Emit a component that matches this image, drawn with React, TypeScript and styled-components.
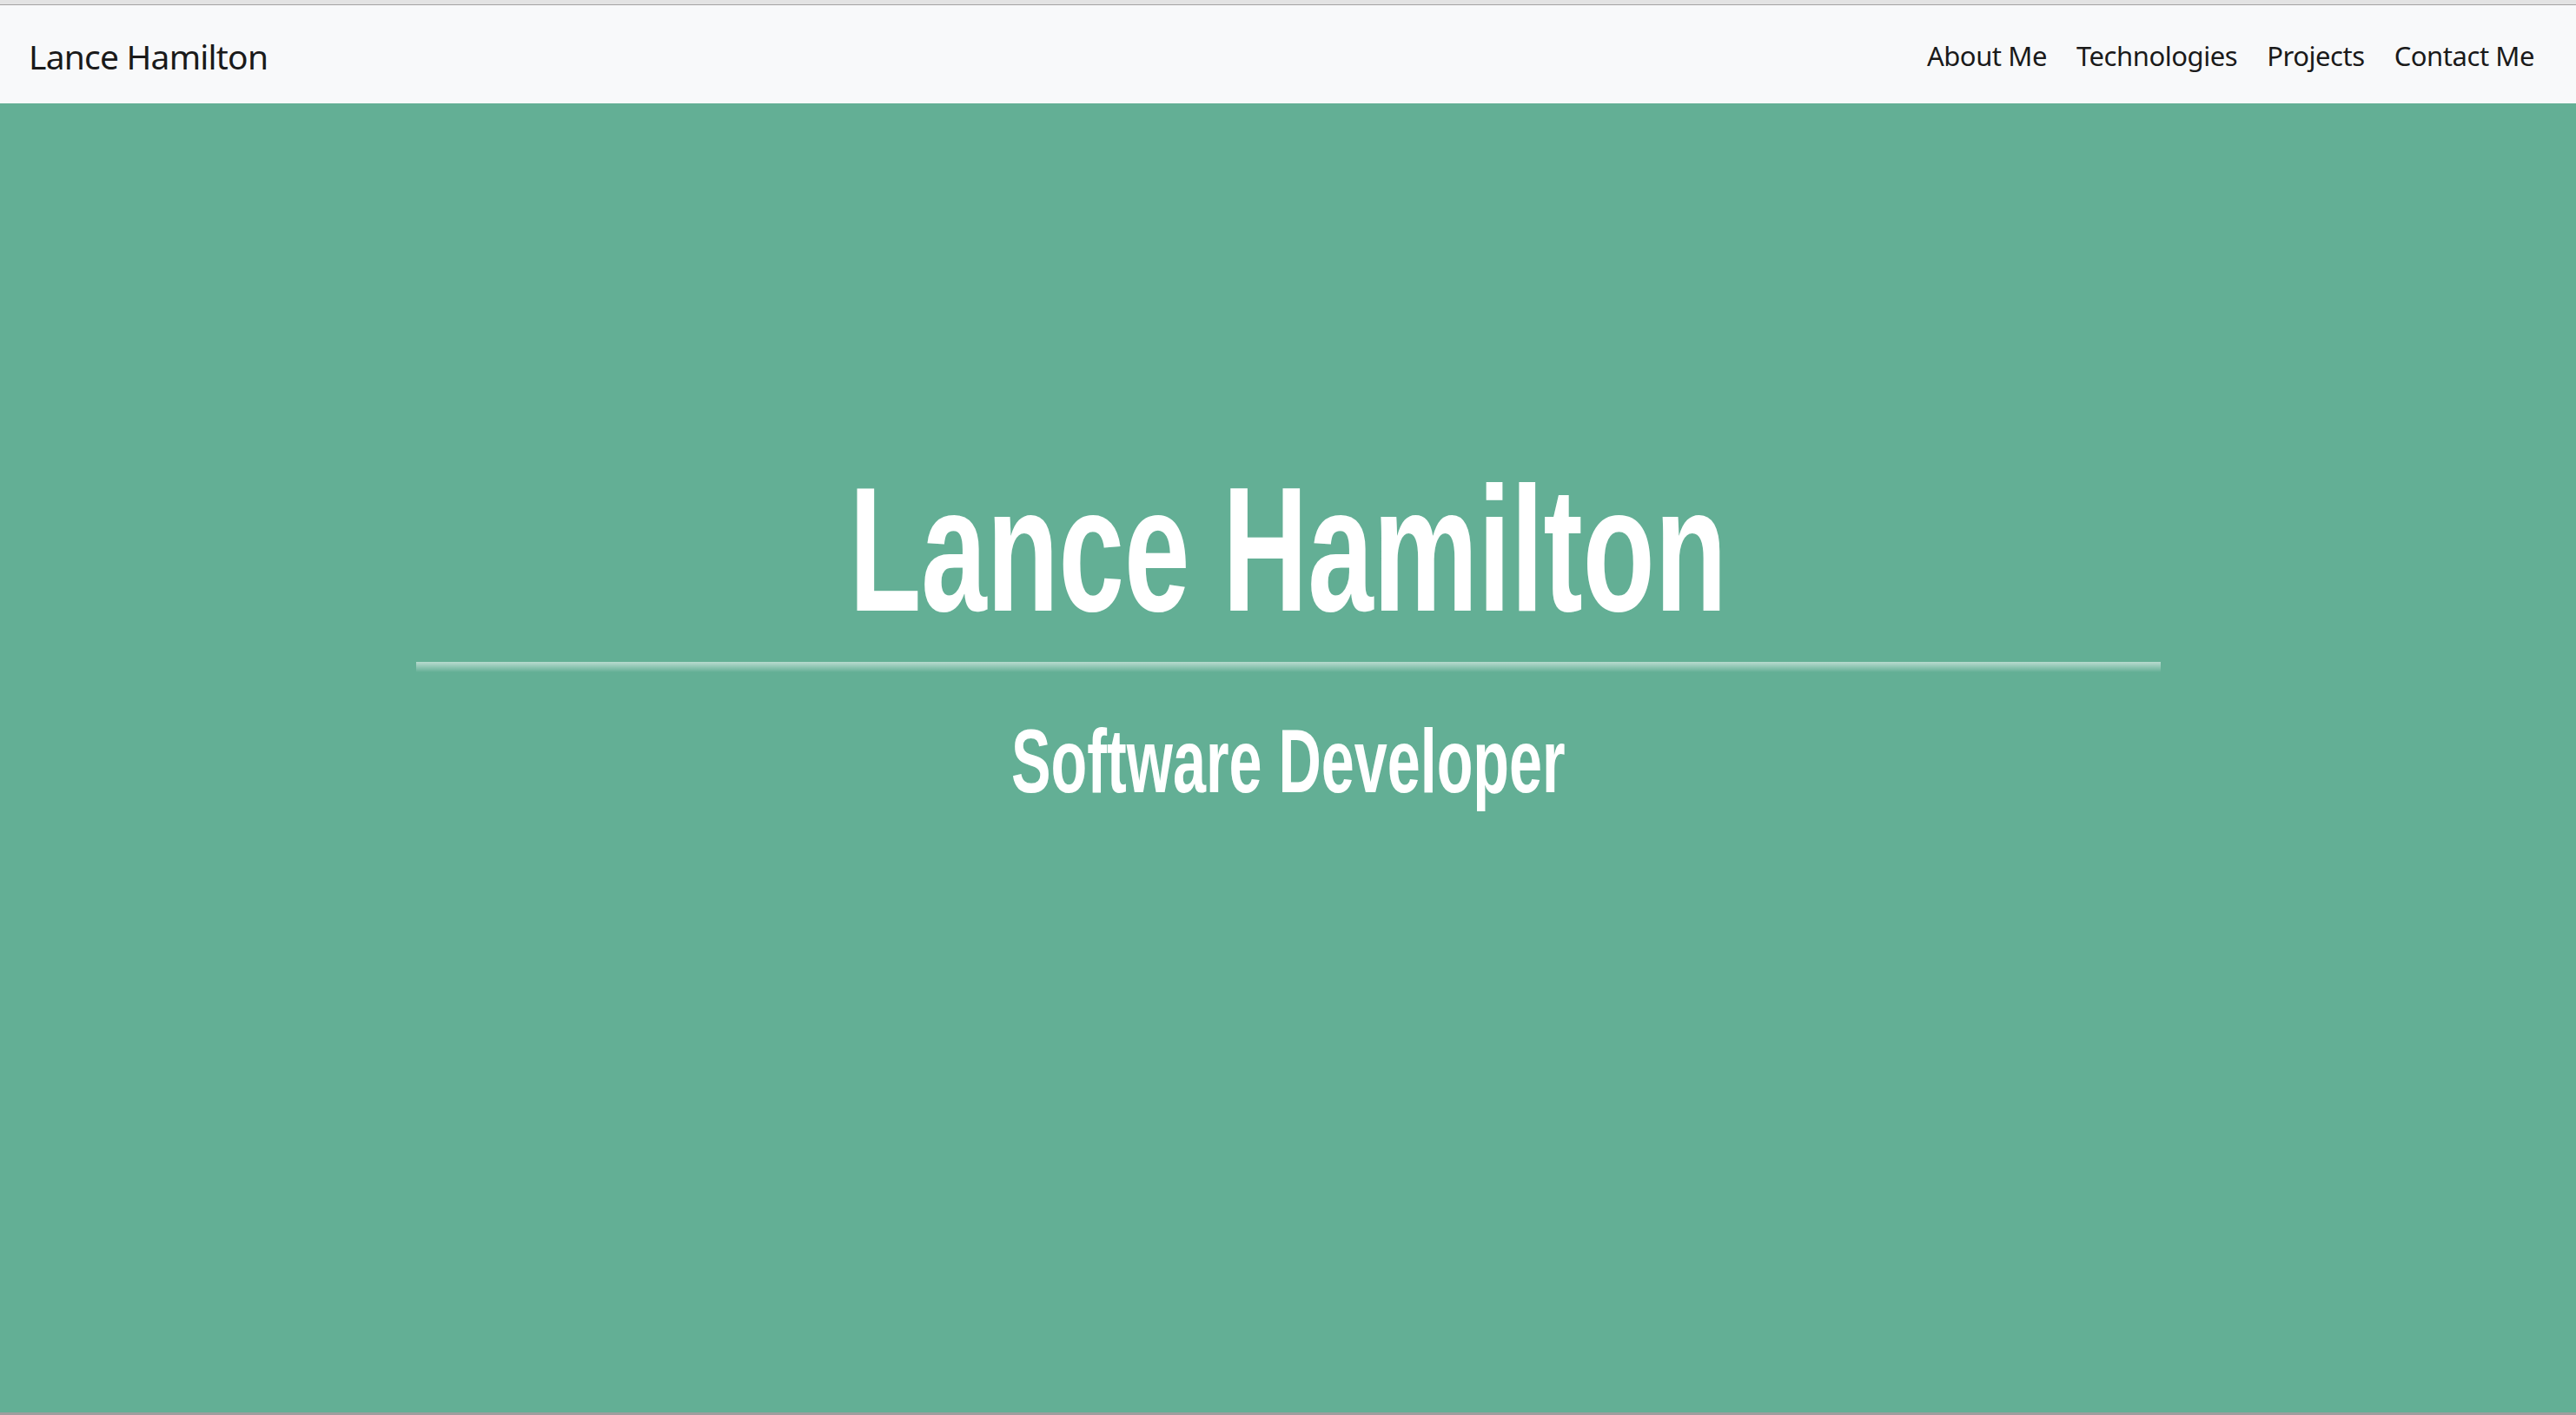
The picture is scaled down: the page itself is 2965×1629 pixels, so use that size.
import React from "react";
import styled, { createGlobalStyle } from "styled-components";

const GlobalStyle = createGlobalStyle`
  html, body { margin: 0; padding: 0; }
  body {
    font-family: "Noto Sans", "Open Sans", sans-serif;
    background: #63af95;
  }
  * { box-sizing: border-box; }
`;

const Page = styled.div`
  display: flex;
  flex-direction: column;
  height: 1629px;
  overflow: hidden;
`;

const ChromeStrip = styled.div`
  height: 6px;
  flex: 0 0 6px;
  background: #e3e3e3;
  border-bottom: 1px solid #a3a3a3;
`;

const Navbar = styled.nav`
  flex: 0 0 113px;
  background: #f8f9fa;
  display: flex;
  align-items: center;
  justify-content: space-between;
  padding: 4px 48px 0 33px;
`;

const Brand = styled.a`
  font-family: "Noto Sans", "Open Sans", sans-serif;
  font-size: 39px;
  letter-spacing: -0.8px;
  line-height: 1;
  color: #1a1a1a;
  text-decoration: none;
`;

const NavList = styled.ul`
  display: flex;
  gap: 34px;
  list-style: none;
  margin: 0;
  padding: 0;
`;

const NavItem = styled.li`
  display: block;
`;

const NavLink = styled.a`
  font-family: "Noto Sans", "Open Sans", sans-serif;
  font-size: 31px;
  letter-spacing: -0.45px;
  line-height: 1;
  color: #1a1a1a;
  text-decoration: none;
`;

const Hero = styled.header`
  flex: 1;
  background: #63af95;
  display: flex;
  flex-direction: column;
  align-items: center;
  padding-top: 411px;
  border-bottom: 3px solid #9e9e9e;
`;

const Title = styled.h1`
  margin: 0;
  font-family: "Liberation Sans", Arial, sans-serif;
  font-weight: 700;
  font-size: 204px;
  line-height: 1;
  color: #ffffff;
  white-space: nowrap;
  transform: scaleX(0.665);
`;

const Divider = styled.hr`
  width: 2008px;
  height: 12px;
  margin: 28px 0 0;
  border: 0;
  background: linear-gradient(
    to bottom,
    rgba(255, 255, 255, 0.55),
    rgba(255, 255, 255, 0)
  );
`;

const Subtitle = styled.h2`
  margin: 51px 0 0;
  font-family: "Liberation Sans", Arial, sans-serif;
  font-weight: 700;
  font-size: 103px;
  line-height: 1;
  color: #ffffff;
  white-space: nowrap;
  transform: scaleX(0.663);
`;

const links = ["About Me", "Technologies", "Projects", "Contact Me"];

export default function App() {
  return (
    <>
      <GlobalStyle />
      <Page>
        <ChromeStrip />
        <Navbar>
          <Brand href="#">Lance Hamilton</Brand>
          <NavList>
            {links.map((l) => (
              <NavItem key={l}>
                <NavLink href="#">{l}</NavLink>
              </NavItem>
            ))}
          </NavList>
        </Navbar>
        <Hero>
          <Title>Lance Hamilton</Title>
          <Divider />
          <Subtitle>Software Developer</Subtitle>
        </Hero>
      </Page>
    </>
  );
}
